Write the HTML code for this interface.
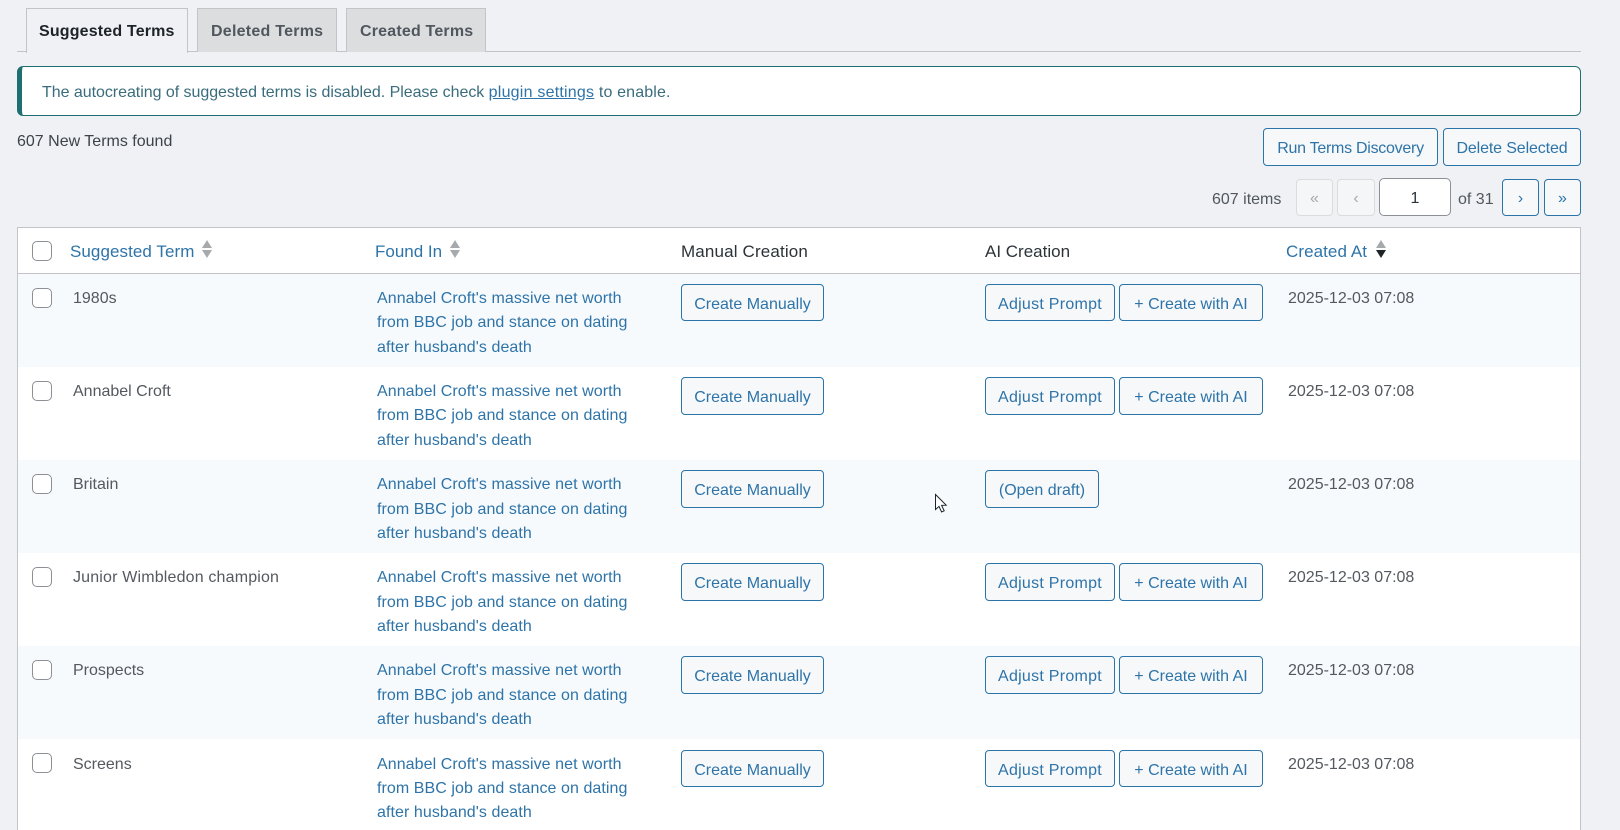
<!DOCTYPE html>
<html lang="en">
<head>
<meta charset="utf-8">
<title>Suggested Terms</title>
<style>
html,body{margin:0;padding:0;width:1620px;height:830px;overflow:hidden;background:#f0f1f4;}
body{position:relative;font-family:"Liberation Sans",Arial,sans-serif;font-size:16px;color:#3c434a;}
.a{position:absolute;box-sizing:border-box;}
.t{position:absolute;white-space:nowrap;line-height:20px;height:20px;margin-top:1px;}
.tab{position:absolute;box-sizing:border-box;top:8px;height:44px;border:1px solid #c3c4c7;border-bottom:0;background:#dcdddf;}
.b{position:absolute;box-sizing:border-box;display:flex;align-items:center;justify-content:center;white-space:nowrap;border:1px solid #2b74a8;border-radius:4px;background:#f6f8fa;color:#2e74a8;padding-top:3px;}
.s{padding-top:5px;}
.cb{position:absolute;box-sizing:border-box;left:32px;width:20px;height:20px;border:1px solid #8c8f94;border-radius:5px;background:#fff;}
.term{color:#54595f;left:73px;}
.link{color:#2e74a8;left:377px;letter-spacing:.07px;}
.date{color:#54595f;left:1288px;}
.am{color:#2e74a8;}
.cm{left:681px;width:143px;}
.ap{left:985px;width:130px;letter-spacing:.27px;}
.ca{left:1119px;width:144px;}
.od{left:985px;width:114px;}
.th{font-size:17px;color:#2e74a8;}
.thd{font-size:17px;color:#2c3338;}
.up{position:absolute;width:0;height:0;border-left:5px solid transparent;border-right:5px solid transparent;border-bottom:8px solid #a7aaad;}
.dn{position:absolute;width:0;height:0;border-left:5px solid transparent;border-right:5px solid transparent;border-top:8px solid #a7aaad;}
</style>
</head>
<body>

<!-- tabs -->
<div class="a" style="left:17px;top:51px;width:1564px;height:1px;background:#c3c4c7"></div>
<div class="tab" style="left:26px;width:162px;background:#f0f1f4;height:45px;border-color:#c3c4c7"></div>
<div class="t" style="left:39px;top:21px;font-weight:bold;color:#1d2327;letter-spacing:.17px">Suggested Terms</div>
<div class="tab" style="left:197px;width:140px"></div>
<div class="t" style="left:211px;top:21px;font-weight:bold;color:#50575e;letter-spacing:.25px">Deleted Terms</div>
<div class="tab" style="left:346px;width:140px"></div>
<div class="t" style="left:360px;top:21px;font-weight:bold;color:#50575e;letter-spacing:.19px">Created Terms</div>

<!-- notice -->
<div class="a" style="left:17px;top:66px;width:1564px;height:50px;background:#fff;border:1px solid #1e6e72;border-left:5px solid #1e6e72;border-radius:6px"></div>
<div class="t" style="left:42px;top:82px;color:#3a6c7c"><span style="letter-spacing:-.04px">The autocreating of suggested terms is disabled. Please check </span><a class="am" style="text-decoration:underline;letter-spacing:.22px">plugin settings</a><span style="letter-spacing:.15px"> to enable.</span></div>

<div class="t" style="left:17px;top:131px;color:#3c434a">607 New Terms found</div>

<!-- top actions -->
<div class="b" style="left:1263px;top:128px;width:175px;height:38px;letter-spacing:-.27px">Run Terms Discovery</div>
<div class="b" style="left:1443px;top:128px;width:138px;height:38px;letter-spacing:-.13px">Delete Selected</div>

<!-- pagination -->
<div class="t" style="left:1212px;top:189px;color:#50575e">607 items</div>
<div class="b" style="left:1296px;top:179px;width:37px;height:37px;border-color:#dcdcde;color:#a7aaad;background:#f4f6f8">«</div>
<div class="b" style="left:1337px;top:179px;width:38px;height:37px;border-color:#dcdcde;color:#a7aaad;background:#f4f6f8">‹</div>
<div class="a" style="left:1379px;top:178px;width:72px;height:38px;border:1px solid #8c8f94;border-radius:5px;background:#fff;line-height:40px;text-align:center;color:#2c3338">1</div>
<div class="t" style="left:1458px;top:189px;color:#50575e">of 31</div>
<div class="b" style="left:1502px;top:179px;width:37px;height:37px">›</div>
<div class="b" style="left:1544px;top:179px;width:37px;height:37px">»</div>

<!-- table frame -->
<div class="a" style="left:17px;top:227px;width:1564px;height:620px;background:#fff;border:1px solid #c3c4c7"></div>
<div class="a" style="left:18px;top:273px;width:1562px;height:1px;background:#c3c4c7"></div>

<!-- stripes -->
<div class="a" style="left:18px;top:274px;width:1562px;height:93px;background:#f7fafd"></div>
<div class="a" style="left:18px;top:460px;width:1562px;height:93px;background:#f7fafd"></div>
<div class="a" style="left:18px;top:646px;width:1562px;height:93px;background:#f7fafd"></div>

<!-- header -->
<div class="cb" style="top:241px"></div>
<div class="t th" style="left:70px;top:241px;letter-spacing:.07px">Suggested Term</div>
<div class="up" style="left:202px;top:240px"></div><div class="dn" style="left:202px;top:250px"></div>
<div class="t th" style="left:375px;top:241px">Found In</div>
<div class="up" style="left:450px;top:240px"></div><div class="dn" style="left:450px;top:250px"></div>
<div class="t thd" style="left:681px;top:241px;letter-spacing:.15px">Manual Creation</div>
<div class="t thd" style="left:985px;top:241px">AI Creation</div>
<div class="t th" style="left:1286px;top:241px;letter-spacing:.07px">Created At</div>
<div class="up" style="left:1376px;top:240px"></div><div class="dn" style="left:1376px;top:250px;border-top-color:#1d2327"></div>

<!-- row 1 -->
<div class="cb" style="top:288px"></div>
<div class="t term" style="top:288px">1980s</div>
<div class="t link" style="top:288px">Annabel Croft's massive net worth</div>
<div class="t link" style="top:312px">from BBC job and stance on dating</div>
<div class="t link" style="top:337px">after husband's death</div>
<div class="b cm s" style="top:284px;height:37px">Create Manually</div>
<div class="b ap s" style="top:284px;height:37px">Adjust Prompt</div>
<div class="b ca s" style="top:284px;height:37px">+ Create with AI</div>
<div class="t date" style="top:288px">2025-12-03 07:08</div>

<!-- row 2 -->
<div class="cb" style="top:381px"></div>
<div class="t term" style="top:381px">Annabel Croft</div>
<div class="t link" style="top:381px">Annabel Croft's massive net worth</div>
<div class="t link" style="top:405px">from BBC job and stance on dating</div>
<div class="t link" style="top:430px">after husband's death</div>
<div class="b cm" style="top:377px;height:38px">Create Manually</div>
<div class="b ap" style="top:377px;height:38px">Adjust Prompt</div>
<div class="b ca" style="top:377px;height:38px">+ Create with AI</div>
<div class="t date" style="top:381px">2025-12-03 07:08</div>

<!-- row 3 -->
<div class="cb" style="top:474px"></div>
<div class="t term" style="top:474px">Britain</div>
<div class="t link" style="top:474px">Annabel Croft's massive net worth</div>
<div class="t link" style="top:499px">from BBC job and stance on dating</div>
<div class="t link" style="top:523px">after husband's death</div>
<div class="b cm" style="top:470px;height:38px">Create Manually</div>
<div class="b od" style="top:470px;height:38px">(Open draft)</div>
<div class="t date" style="top:474px">2025-12-03 07:08</div>

<!-- row 4 -->
<div class="cb" style="top:567px"></div>
<div class="t term" style="top:567px;letter-spacing:.17px">Junior Wimbledon champion</div>
<div class="t link" style="top:567px">Annabel Croft's massive net worth</div>
<div class="t link" style="top:592px">from BBC job and stance on dating</div>
<div class="t link" style="top:616px">after husband's death</div>
<div class="b cm" style="top:563px;height:38px">Create Manually</div>
<div class="b ap" style="top:563px;height:38px">Adjust Prompt</div>
<div class="b ca" style="top:563px;height:38px">+ Create with AI</div>
<div class="t date" style="top:567px">2025-12-03 07:08</div>

<!-- row 5 -->
<div class="cb" style="top:660px"></div>
<div class="t term" style="top:660px">Prospects</div>
<div class="t link" style="top:660px">Annabel Croft's massive net worth</div>
<div class="t link" style="top:685px">from BBC job and stance on dating</div>
<div class="t link" style="top:709px">after husband's death</div>
<div class="b cm" style="top:656px;height:38px">Create Manually</div>
<div class="b ap" style="top:656px;height:38px">Adjust Prompt</div>
<div class="b ca" style="top:656px;height:38px">+ Create with AI</div>
<div class="t date" style="top:660px">2025-12-03 07:08</div>

<!-- row 6 -->
<div class="cb" style="top:753px"></div>
<div class="t term" style="top:754px">Screens</div>
<div class="t link" style="top:754px">Annabel Croft's massive net worth</div>
<div class="t link" style="top:778px">from BBC job and stance on dating</div>
<div class="t link" style="top:802px">after husband's death</div>
<div class="b cm s" style="top:750px;height:37px">Create Manually</div>
<div class="b ap s" style="top:750px;height:37px">Adjust Prompt</div>
<div class="b ca s" style="top:750px;height:37px">+ Create with AI</div>
<div class="t date" style="top:754px">2025-12-03 07:08</div>

<!-- cursor -->
<svg class="a" style="left:934px;top:493px" width="15" height="21" viewBox="0 0 15 21">
<path d="M1.5 1.5 L1.5 16.5 L5 13.4 L7.6 19 L10.2 17.8 L7.6 12.4 L12.2 12.2 Z" fill="#fff" stroke="#1d2327" stroke-width="1" stroke-linejoin="miter"/>
</svg>

</body>
</html>
